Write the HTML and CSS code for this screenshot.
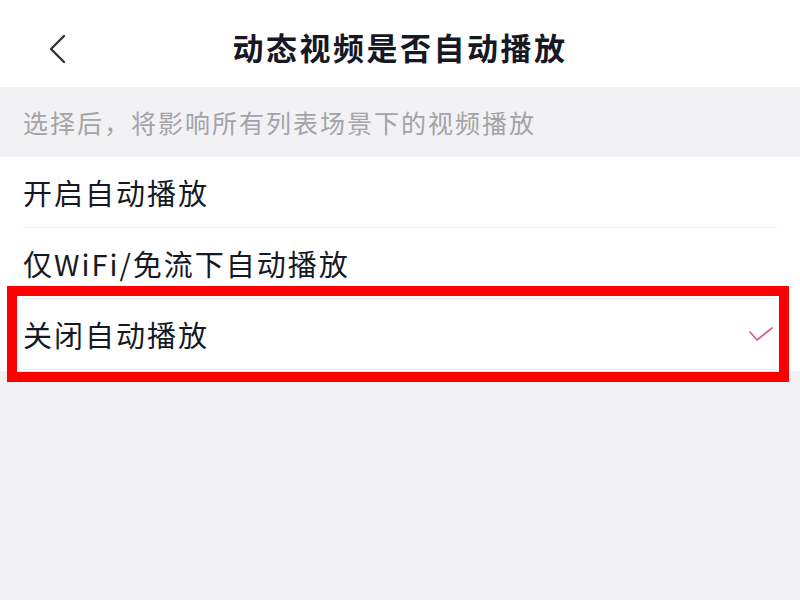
FILE: index.html
```html
<!DOCTYPE html>
<html lang="zh">
<head>
    <meta charset="utf-8">
    <title>动态视频是否自动播放</title>
    <link rel="stylesheet" href="styles.css">
</head>
<body>
    <div class="topbar">
        <span class="back">
            <svg width="22" height="30" viewBox="0 0 22 30">
                <polyline points="18,2 5,15 18,28" fill="none" stroke="#333" stroke-width="2.4" stroke-linecap="round" stroke-linejoin="round"/>
            </svg>
        </span>
        <h1 class="title">动态视频是否自动播放</h1>
    </div>

    <div class="hint">选择后，将影响所有列表场景下的视频播放</div>

    <ul class="options">
        <li class="option">开启自动播放</li>
        <li class="option">仅WiFi/免流下自动播放</li>
        <li class="option selected">
            关闭自动播放
            <svg class="check" width="24" height="16" viewBox="0 0 24 16">
                <polyline points="1,6 8,14 23,2" fill="none" stroke="#d9678c" stroke-width="1.8" stroke-linecap="round" stroke-linejoin="round"/>
            </svg>
            <span class="mark"></span>
        </li>
    </ul>
</body>
</html>
```

FILE: styles.css
```css
html, body {
    min-height: 100%;
}

body {
    margin: 0;
    min-height: 600px;
    background-color: #f2f2f4;
    font-family: "Noto Sans CJK SC", "Noto Sans", sans-serif;
    color: #161823;
}

.topbar {
    height: 87px;
    background-color: #fff;
    display: flex;
    align-items: center;
    justify-content: center;
    position: relative;
}

.back {
    position: absolute;
    left: 46px;
    top: 34px;
}

.title {
    margin: 0;
    padding-top: 6px;
    font-size: 31px;
    font-weight: bold;
    letter-spacing: 2.5px;
}

.hint {
    height: 70px;
    line-height: 70px;
    padding-left: 23px;
    font-size: 25px;
    letter-spacing: 2px;
    color: #a3a3a8;
}

.options {
    list-style: none;
    margin: 0;
    padding: 0 0 1px;
    background-color: #fff;
}

.option {
    margin: 0 23px;
    height: 70px;
    border-bottom: 1px solid #ececee;
    display: flex;
    align-items: center;
    font-size: 29px;
    letter-spacing: 2px;
    position: relative;
}

.check {
    margin-left: auto;
    margin-right: 4px;
}

.mark {
    position: absolute;
    box-sizing: border-box;
    left: -16px;
    top: -13px;
    width: calc(100% + 28px);
    height: 96px;
    border: 10px solid #ff0000;
    z-index: 2;
}
```
